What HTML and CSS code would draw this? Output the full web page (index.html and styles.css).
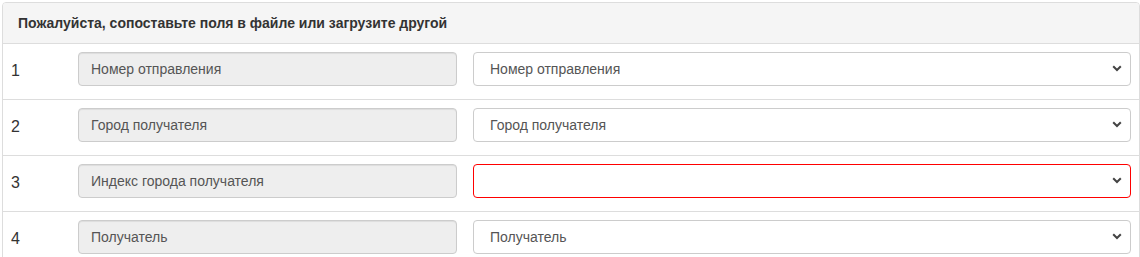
FILE: index.html
```html
<!DOCTYPE html>
<html lang="ru">
<head>
<meta charset="utf-8">
<title>Сопоставление полей</title>
<link rel="stylesheet" href="styles.css">
</head>
<body>
<div class="panel">
  <div class="panel-heading">Пожалуйста, сопоставьте поля в файле или загрузите другой</div>
  <div class="row">
    <div class="num">1</div>
    <div class="cell"><div class="field-ro">Номер отправления</div></div>
    <div class="cell"><div class="field-select"><span>Номер отправления</span><svg class="chev" width="10" height="7" viewBox="0 0 10 7"><path d="M1.2 1.2 L5 5 L8.8 1.2" fill="none" stroke="#444" stroke-width="2"/></svg></div></div>
  </div>
  <div class="row">
    <div class="num">2</div>
    <div class="cell"><div class="field-ro">Город получателя</div></div>
    <div class="cell"><div class="field-select"><span>Город получателя</span><svg class="chev" width="10" height="7" viewBox="0 0 10 7"><path d="M1.2 1.2 L5 5 L8.8 1.2" fill="none" stroke="#444" stroke-width="2"/></svg></div></div>
  </div>
  <div class="row">
    <div class="num">3</div>
    <div class="cell"><div class="field-ro">Индекс города получателя</div></div>
    <div class="cell"><div class="field-select error"><span></span><svg class="chev" width="10" height="7" viewBox="0 0 10 7"><path d="M1.2 1.2 L5 5 L8.8 1.2" fill="none" stroke="#444" stroke-width="2"/></svg></div></div>
  </div>
  <div class="row">
    <div class="num">4</div>
    <div class="cell"><div class="field-ro">Получатель</div></div>
    <div class="cell"><div class="field-select"><span>Получатель</span><svg class="chev" width="10" height="7" viewBox="0 0 10 7"><path d="M1.2 1.2 L5 5 L8.8 1.2" fill="none" stroke="#444" stroke-width="2"/></svg></div></div>
  </div>
</div>
</body>
</html>
```

FILE: styles.css
```css
html, body {
  margin: 0;
  padding: 0;
  background: #fff;
  overflow: hidden;
}
body {
  padding: 2px 0 0 2px;
  font-family: "Liberation Sans", Arial, sans-serif;
  color: #333;
}
.panel {
  width: 1138px;
  box-sizing: border-box;
  border: 1px solid #ddd;
  border-radius: 4px;
  background: #fff;
}
.panel-heading {
  background: #f5f5f5;
  border-bottom: 1px solid #ddd;
  border-radius: 3px 3px 0 0;
  padding: 10px 15px;
  line-height: 20px;
  font-size: 14px;
  font-weight: bold;
  color: #333;
}
.row {
  display: grid;
  grid-template-columns: 67px 395px 1fr;
  border-top: 1px solid #ddd;
}
.panel-heading + .row {
  border-top: none;
}
.num {
  padding: 10px 0 11px 8px;
  font-size: 16px;
  line-height: 34px;
  color: #333;
}
.cell {
  padding: 8px 8px 13px 8px;
}
.field-ro,
.field-select {
  box-sizing: border-box;
  height: 34px;
  border: 1px solid #ccc;
  border-radius: 4px;
  font-size: 14px;
  color: #555;
  line-height: 20px;
}
.field-ro {
  background: #eee;
  padding: 6px 12px;
  box-shadow: inset 0 1px 1px rgba(0,0,0,0.075);
}
.field-select {
  background: #fff;
  padding: 6px 8px 6px 16px;
  display: flex;
  align-items: center;
  justify-content: space-between;
}
.field-select.error {
  border-color: #f00;
}
.chev {
  display: block;
  margin-top: -2px;
}
```
